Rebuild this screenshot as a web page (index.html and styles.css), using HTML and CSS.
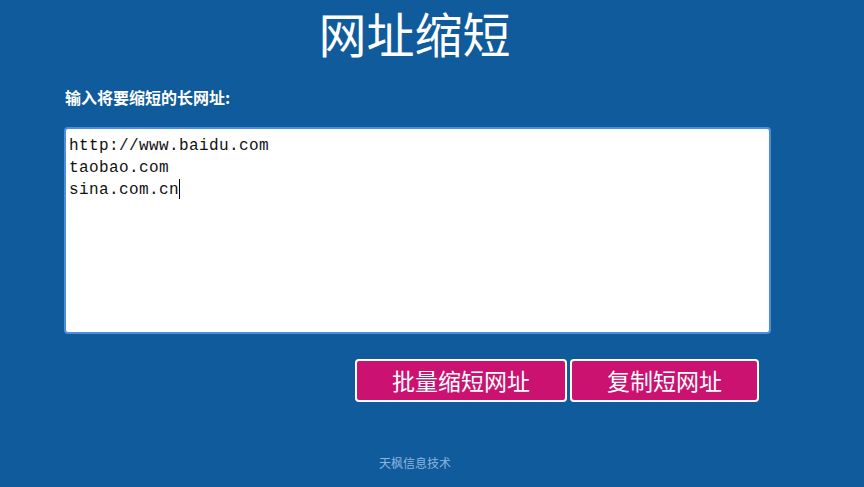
FILE: index.html
```
<!DOCTYPE html>
<html lang="zh-CN">
<head>
  <meta charset="UTF-8">
  <title>网址缩短</title>
  <link rel="stylesheet" href="styles.css">
</head>
<body>
  <div class="wrap">
    <h1>网址缩短</h1>

    <label class="tip" for="urls">输入将要缩短的长网址:</label>
    <div class="box" id="urls">http://www.baidu.com<br>taobao.com<br>sina.com.cn<span class="caret"></span></div>

    <div class="btns">
      <button type="button" class="btn">批量缩短网址</button>
      <button type="button" class="btn">复制短网址</button>
    </div>

    <div class="foot">天枫信息技术</div>
  </div>
</body>
</html>
```

FILE: styles.css
```
html, body {
  margin: 0;
  height: 100%;
}

body {
  background-color: #0f5b9b;
  font-family: "Noto Sans CJK SC", "Noto Sans", sans-serif;
  color: #fff;
}

.wrap {
  width: 707px;
  margin-left: 64px;
}

h1 {
  margin: 0;
  padding-right: 6px;
  font-size: 48px;
  line-height: 64px;
  font-weight: normal;
  text-align: center;
}

.tip {
  display: block;
  margin-top: 22px;
  margin-left: 1px;
  font-size: 16px;
  font-weight: bold;
  line-height: 22px;
}

.box {
  margin-top: 19px;
  height: 197px;
  padding: 6px 3px 0;
  background: #fff;
  border: 2px solid #4d8fdc;
  border-radius: 4px;
  color: #111;
  font-family: "Liberation Mono", "Noto Sans CJK SC", monospace;
  font-size: 16px;
  letter-spacing: 0.4px;
  line-height: 22px;
}

.caret {
  display: inline-block;
  width: 1px;
  height: 20px;
  background: #000;
  vertical-align: -5px;
}

.btns {
  display: flex;
  justify-content: flex-end;
  gap: 3px;
  margin-top: 25px;
  padding-right: 12px;
}

.btn {
  height: 43px;
  padding: 0 35px;
  background-color: #cc1270;
  color: #fff;
  border: 2px solid #fff;
  border-radius: 4px;
  font-family: "Noto Sans CJK SC", sans-serif;
  font-size: 23px;
  line-height: 1;
  cursor: pointer;
}

.foot {
  margin-top: 52px;
  padding-right: 5px;
  text-align: center;
  font-size: 12px;
  color: #8db5de;
}
```
